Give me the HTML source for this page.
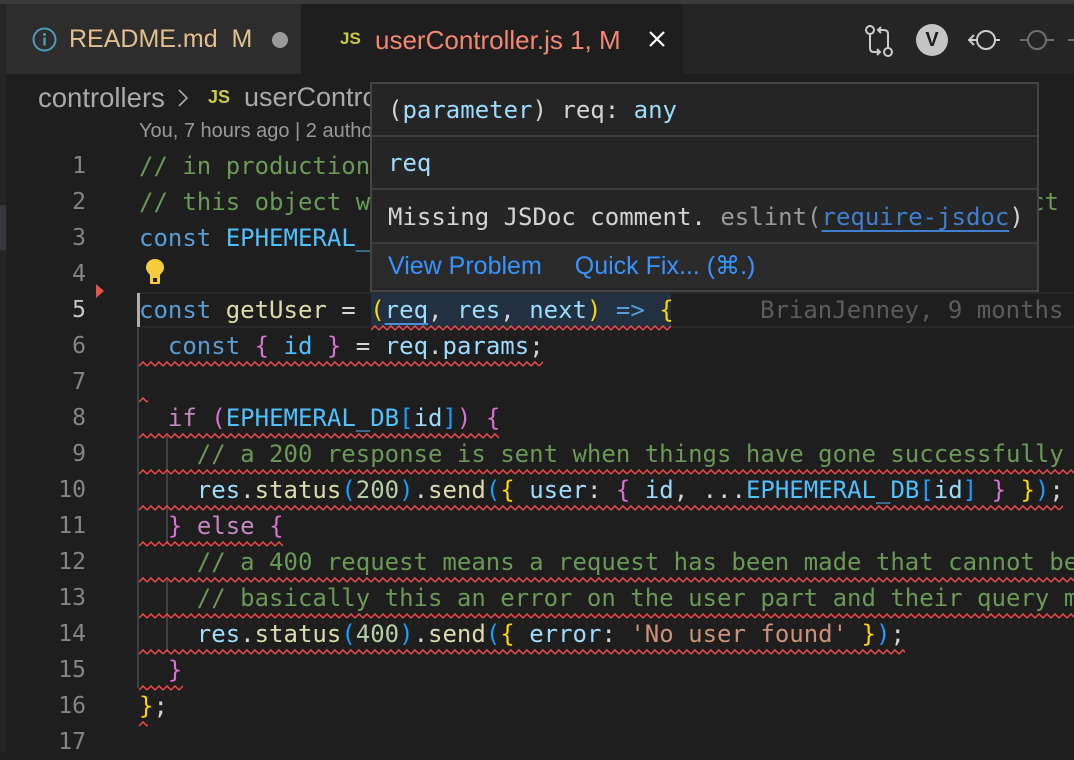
<!DOCTYPE html>
<html><head><style>
*{margin:0;padding:0;box-sizing:border-box}
body{width:1074px;height:752px;background:#1e1e1e;overflow:hidden;position:relative;font-family:"DejaVu Sans Mono","Liberation Mono",monospace}
.abs{position:absolute}
.sans{font-family:"Liberation Sans",sans-serif}
.ln{position:absolute;right:988px;width:60px;text-align:right;font-size:23px;color:#858585;line-height:36px}
.code{position:absolute;left:139px;font-size:24px;line-height:36px;white-space:pre;color:#d4d4d4}
.c{color:#6a9955}.k{color:#569cd6}.v{color:#4fc1ff}.f{color:#dcdcaa}.p{color:#9cdcfe}.y{color:#ffd700}.m{color:#da70d6}.b{color:#179fff}.n{color:#b5cea8}.s{color:#ce9178}.kw{color:#c586c0}
.sq{position:absolute;height:6px}
</style></head><body>
<svg width="0" height="0" style="position:absolute"><defs><pattern id="w" width="8" height="6" patternUnits="userSpaceOnUse"><path d="M0 5L4 1L8 5" fill="none" stroke="#f14c4c" stroke-width="1.5"/></pattern></defs></svg>
<div class="abs" style="left:0;top:0;width:1074px;height:4px;background:#3a3a3a"></div>
<div class="abs" style="left:0;top:4px;width:1074px;height:70px;background:#252526"></div>
<div class="abs" style="left:6px;top:4px;width:295px;height:70px;background:#2d2d2d"></div>
<div class="abs" style="left:301px;top:4px;width:382px;height:70px;background:#1e1e1e"></div>
<div class="abs" style="left:0;top:74px;width:6px;height:678px;background:#252526"></div>
<div class="abs" style="left:0;top:205px;width:6px;height:45px;background:#37373d"></div>
<!-- tab 1 -->
<svg class="abs" style="left:32px;top:27px" width="25" height="25" viewBox="0 0 25 25"><circle cx="12.5" cy="12.5" r="11" fill="none" stroke="#519aba" stroke-width="2"/><circle cx="12.5" cy="7.5" r="1.5" fill="#519aba"/><rect x="11.3" y="10.5" width="2.4" height="8" fill="#519aba"/></svg>
<div class="abs sans" style="left:69px;top:25px;font-size:25px;color:#e2c08d;white-space:pre">README.md  M</div>
<div class="abs" style="left:272px;top:32px;width:16px;height:16px;border-radius:50%;background:#9a9a9a"></div>
<!-- tab 2 -->
<div class="abs sans" style="left:340px;top:29px;font-size:17px;font-weight:bold;color:#cbcb41">JS</div>
<div class="abs sans" style="left:375px;top:25px;font-size:26px;color:#f48771">userController.js 1, M</div>
<svg class="abs" style="left:647px;top:29px" width="20" height="20"><path d="M3 3L17 17M17 3L3 17" stroke="#fff" stroke-width="2.2"/></svg>
<!-- right icons -->
<svg class="abs" style="left:864px;top:24px" width="32" height="34" viewBox="0 0 32 34" fill="none" stroke="#ccc" stroke-width="2"><circle cx="6" cy="6" r="4"/><path d="M6 10V24Q6 28 10 28H16M13 25l3 3-3 3"/><circle cx="24" cy="28" r="4"/><path d="M24 24V10Q24 6 20 6H14M17 3l-3 3 3 3"/></svg>
<div class="abs sans" style="left:916px;top:24px;width:32px;height:32px;border-radius:50%;background:#c5c5c5;color:#1e1e1e;font-weight:bold;font-size:20px;text-align:center;line-height:32px">V</div>
<svg class="abs" style="left:966px;top:26px" width="36" height="28" fill="none" stroke="#ccc" stroke-width="2"><circle cx="20" cy="14" r="9"/><path d="M11 14H3M8 9l-5 5 5 5M29 14h5"/></svg>
<svg class="abs" style="left:1020px;top:26px" width="54" height="28" fill="none" stroke="#6e6e6e" stroke-width="2"><circle cx="17" cy="14" r="9"/><path d="M0 14h8M26 14h8M48 14h6"/></svg>
<!-- breadcrumb -->
<div class="abs sans" style="left:38px;top:82px;font-size:27.5px;color:#a9a9a9;white-space:pre">controllers</div>
<svg class="abs" style="left:176px;top:88px" width="14" height="20"><path d="M3 2l8 8-8 8" fill="none" stroke="#a9a9a9" stroke-width="1.6"/></svg>
<div class="abs sans" style="left:208px;top:87px;font-size:18px;font-weight:bold;color:#cbcb41">JS</div>
<div class="abs sans" style="left:244px;top:82px;font-size:27px;color:#a9a9a9;white-space:pre">userController.js</div>
<div class="abs sans" style="left:139px;top:120px;font-size:20px;color:#999;white-space:pre">You, 7 hours ago | 2 authors (You and others)</div>
<!-- current line -->
<div class="abs" style="left:137px;top:292px;width:937px;height:36px;border-top:2px solid #282828;border-bottom:2px solid #282828"></div>
<div class="abs" style="left:371px;top:293px;width:300px;height:34px;background:#233040"></div>
<div class="abs" style="left:137px;top:293px;width:3px;height:34px;background:#aeafad"></div>
<!-- indent guides -->
<div class="abs" style="left:137px;top:328px;width:2px;height:360px;background:#404040"></div>
<div class="abs" style="left:166px;top:436px;width:2px;height:108px;background:#404040"></div>
<div class="abs" style="left:166px;top:580px;width:2px;height:72px;background:#404040"></div>
<!-- line numbers -->
<div class="ln" style="top:148px">1</div><div class="ln" style="top:184px">2</div><div class="ln" style="top:220px">3</div><div class="ln" style="top:256px">4</div><div class="ln" style="top:292px;color:#c6c6c6">5</div><div class="ln" style="top:328px">6</div><div class="ln" style="top:364px">7</div><div class="ln" style="top:400px">8</div><div class="ln" style="top:436px">9</div><div class="ln" style="top:472px">10</div><div class="ln" style="top:508px">11</div><div class="ln" style="top:544px">12</div><div class="ln" style="top:580px">13</div><div class="ln" style="top:616px">14</div><div class="ln" style="top:652px">15</div><div class="ln" style="top:688px">16</div><div class="ln" style="top:724px">17</div>
<svg class="abs" style="left:96px;top:284px" width="8" height="14"><path d="M0 0L8 7L0 14Z" fill="#e5534b"/></svg>
<svg class="abs" style="left:145px;top:258px" width="20" height="28" viewBox="0 0 20 28"><path d="M10 1C4.5 1 1 5 1 9.5c0 3.5 2.5 5.5 4 7.5V20h10v-3c1.5-2 4-4 4-7.5C19 5 15.5 1 10 1Z" fill="#f6cc3d"/><rect x="5" y="19" width="10" height="7" rx="1" fill="#f6cc3d"/><rect x="8" y="20" width="4" height="4" fill="#1e1e1e"/></svg>
<!-- squiggles -->
<svg class="sq" style="left:371px;top:325px" width="300" height="6"><rect width="300" height="6" fill="url(#w)"/></svg>
<svg class="sq" style="left:139px;top:361px" width="404" height="6"><rect width="404" height="6" fill="url(#w)"/></svg>
<svg class="sq" style="left:139px;top:397px" width="9" height="6"><rect width="9" height="6" fill="url(#w)"/></svg>
<svg class="sq" style="left:139px;top:433px" width="360" height="6"><rect width="360" height="6" fill="url(#w)"/></svg>
<svg class="sq" style="left:139px;top:469px" width="935" height="6"><rect width="935" height="6" fill="url(#w)"/></svg>
<svg class="sq" style="left:139px;top:505px" width="924" height="6"><rect width="924" height="6" fill="url(#w)"/></svg>
<svg class="sq" style="left:139px;top:541px" width="144" height="6"><rect width="144" height="6" fill="url(#w)"/></svg>
<svg class="sq" style="left:139px;top:577px" width="935" height="6"><rect width="935" height="6" fill="url(#w)"/></svg>
<svg class="sq" style="left:139px;top:613px" width="935" height="6"><rect width="935" height="6" fill="url(#w)"/></svg>
<svg class="sq" style="left:139px;top:649px" width="766" height="6"><rect width="766" height="6" fill="url(#w)"/></svg>
<svg class="sq" style="left:139px;top:685px" width="44" height="6"><rect width="44" height="6" fill="url(#w)"/></svg>
<svg class="sq" style="left:139px;top:721px" width="9" height="6"><rect width="9" height="6" fill="url(#w)"/></svg>
<!-- code -->
<div class="code" style="top:148px"><span class="c">// in production this would be connected to a real database</span></div>
<div class="code" style="top:184px"><span class="c">// this object w</span></div>
<div class="code c" style="top:184px;left:1030px">ct</div>
<div class="code" style="top:220px"><span class="k">const</span> <span class="v">EPHEMERAL_DB</span></div>
<div class="code" style="top:292px"><span class="k">const</span> <span class="f">getUser</span> = <span class="y">(</span><span class="p" style="text-decoration:underline solid #4a8fd6;text-underline-offset:5px">req</span>, <span class="p">res</span>, <span class="p">next</span><span class="y">)</span> <span class="k">=&gt;</span> <span class="y">{</span></div>
<div class="code" style="top:292px;left:760px;color:#5c5c5c">BrianJenney, 9 months ago</div>
<div class="code" style="top:328px">  <span class="k">const</span> <span class="m">{</span> <span class="v">id</span> <span class="m">}</span> = <span class="p">req</span>.<span class="p">params</span>;</div>
<div class="code" style="top:400px">  <span class="kw">if</span> <span class="m">(</span><span class="v">EPHEMERAL_DB</span><span class="b">[</span><span class="p">id</span><span class="b">]</span><span class="m">)</span> <span class="m">{</span></div>
<div class="code" style="top:436px">    <span class="c">// a 200 response is sent when things have gone successfully</span></div>
<div class="code" style="top:472px">    <span class="p">res</span>.<span class="f">status</span><span class="b">(</span><span class="n">200</span><span class="b">)</span>.<span class="f">send</span><span class="b">(</span><span class="y">{</span> <span class="p">user</span>: <span class="m">{</span> <span class="p">id</span>, ...<span class="v">EPHEMERAL_DB</span><span class="b">[</span><span class="p">id</span><span class="b">]</span> <span class="m">}</span> <span class="y">}</span><span class="b">)</span>;</div>
<div class="code" style="top:508px">  <span class="m">}</span> <span class="kw">else</span> <span class="m">{</span></div>
<div class="code" style="top:544px">    <span class="c">// a 400 request means a request has been made that cannot be</span></div>
<div class="code" style="top:580px">    <span class="c">// basically this an error on the user part and their query m</span></div>
<div class="code" style="top:616px">    <span class="p">res</span>.<span class="f">status</span><span class="b">(</span><span class="n">400</span><span class="b">)</span>.<span class="f">send</span><span class="b">(</span><span class="y">{</span> <span class="p">error</span>: <span class="s">'No user found'</span> <span class="y">}</span><span class="b">)</span>;</div>
<div class="code" style="top:652px">  <span class="m">}</span></div>
<div class="code" style="top:688px"><span class="y">}</span>;</div>
<!-- hover popup -->
<div class="abs" style="left:370px;top:82px;width:669px;height:210px;background:#252526;border:2px solid #454545">
 <div style="height:53px;border-bottom:2px solid #3c3c3c;padding-left:16px;font-size:24px;line-height:52px;color:#d4d4d4;white-space:pre">(<span class="p">parameter</span>) req: <span class="p">any</span></div>
 <div style="height:53px;border-bottom:2px solid #3c3c3c;padding-left:16px;font-size:24px;line-height:52px;white-space:pre"><span class="p">req</span></div>
 <div style="height:54px;border-bottom:2px solid #3c3c3c;padding-left:16px;font-size:24px;line-height:54px;color:#d4d4d4;white-space:pre">Missing JSDoc comment. <span style="color:#999">eslint(</span><span style="color:#3f7fd0;text-decoration:underline;text-underline-offset:5px">require-jsdoc</span><span style="color:#d4d4d4">)</span></div>
 <div class="sans" style="height:44px;background:#2a2a2b;padding-left:16px;font-size:25px;line-height:44px;color:#3794ff;white-space:pre">View Problem<span style="display:inline-block;width:33px"></span>Quick Fix... (⌘.)</div>
</div>
</body></html>
